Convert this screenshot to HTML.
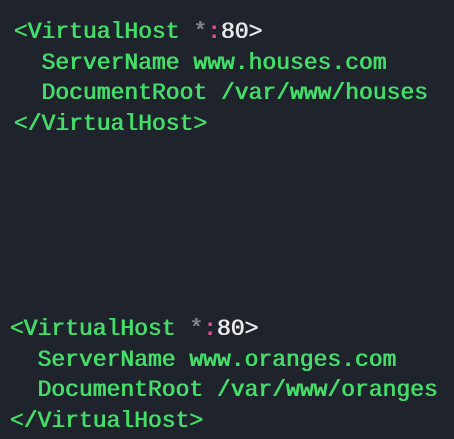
<!DOCTYPE html>
<html><head><style>
body{margin:0;width:454px;height:439px;background:#1f232b;overflow:hidden}
pre{position:absolute;margin:0;font-family:"Liberation Mono",monospace;font-size:23px;line-height:30.5px;color:#45dd6a;font-weight:normal;text-shadow:0.4px 0 0 currentColor,-0.4px 0 0 currentColor}
.g{color:#7f848c}.p{color:#e04f9a}.w{color:#e8e8ea}
</style></head><body>
<pre style="left:14px;top:17px">&lt;VirtualHost <span class="g">*</span><span class="p">:</span><span class="w">80&gt;</span>
  ServerName www.houses.com
  DocumentRoot /var/www/houses
&lt;/VirtualHost&gt;</pre>
<pre style="left:10px;top:314px">&lt;VirtualHost <span class="g">*</span><span class="p">:</span><span class="w">80&gt;</span>
  ServerName www.oranges.com
  DocumentRoot /var/www/oranges
&lt;/VirtualHost&gt;</pre>
</body></html>
